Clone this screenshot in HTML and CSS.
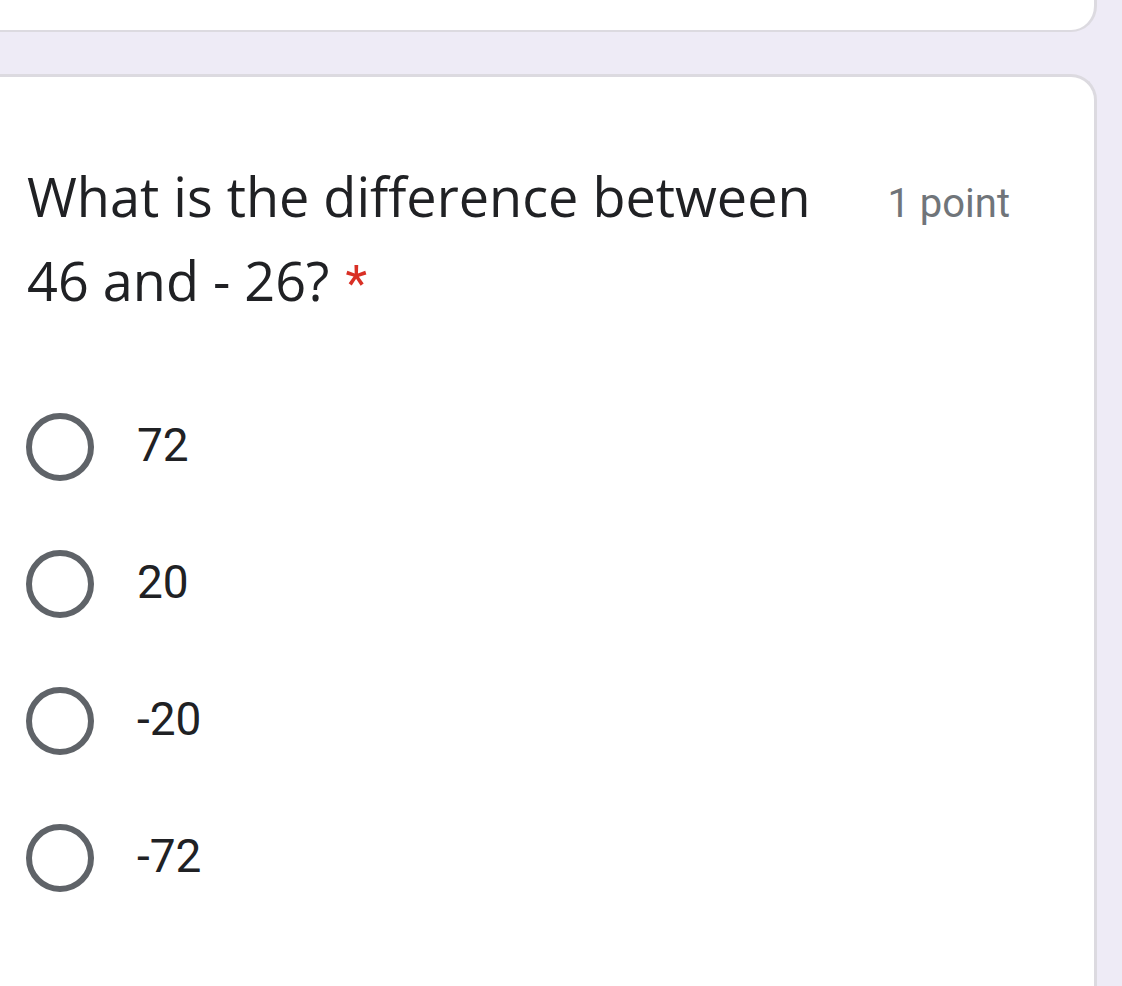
FILE: index.html
```html
<!DOCTYPE html>
<html>
<head>
<meta charset="utf-8">
<link rel="stylesheet" href="styles.css">
</head>
<body>
<div class="page">
  <div class="card card-prev"></div>
  <div class="card card-question">
    <div class="q-head">
      <div class="q-title">What is the difference between 46 and - 26?<span class="req">*</span></div>
      <div class="q-points">1 point</div>
    </div>
    <div class="options">
      <div class="option"><span class="radio"></span><span class="opt-label">72</span></div>
      <div class="option"><span class="radio"></span><span class="opt-label">20</span></div>
      <div class="option"><span class="radio"></span><span class="opt-label">-20</span></div>
      <div class="option"><span class="radio"></span><span class="opt-label">-72</span></div>
    </div>
  </div>
</div>
</body>
</html>
```

FILE: styles.css
```css
html, body {
  margin: 0;
  padding: 0;
  height: 100%;
  overflow: hidden;
}
body {
  background: #eeebf6;
  font-family: Roboto, "Liberation Sans", Arial, sans-serif;
  color: #202124;
}
.page {
  display: flex;
  flex-direction: column;
  gap: 42px;
  width: 1137px;
  margin-left: -40px;
}
.card {
  background: #ffffff;
  border: 3px solid #dcdae0;
  border-radius: 26px;
  box-sizing: border-box;
}
.card-prev {
  height: 200px;
  margin-top: -168px;
  border-width: 0 3px 2px 3px;
}
.card-question {
  padding: 77px 84px 200px 64px;
  border-bottom: none;
  border-bottom-left-radius: 0;
  border-bottom-right-radius: 0;
}
.q-head {
  display: flex;
  align-items: baseline;
}
.q-title {
  flex: 1;
  font-family: "Open Sans", Roboto, sans-serif;
  font-size: 54px;
  line-height: 84px;
  color: #202124;
  padding-right: 50px;
}
.req {
  color: #d93025;
  margin-left: 16px;
  font-family: Roboto, sans-serif;
  font-size: 50px;
}
.q-points {
  font-size: 40px;
  color: #70757a;
  white-space: nowrap;
}
.options {
  display: flex;
  flex-direction: column;
  margin-top: 52px;
}
.option {
  height: 137px;
  display: flex;
  align-items: center;
  gap: 43px;
}
.radio {
  width: 68px;
  height: 68px;
  box-sizing: border-box;
  border: 6.5px solid #5f6368;
  border-radius: 50%;
  margin-left: -1px;
  flex: none;
}
.opt-label {
  font-size: 46px;
  color: #202124;
  margin-top: -4px;
}
```
